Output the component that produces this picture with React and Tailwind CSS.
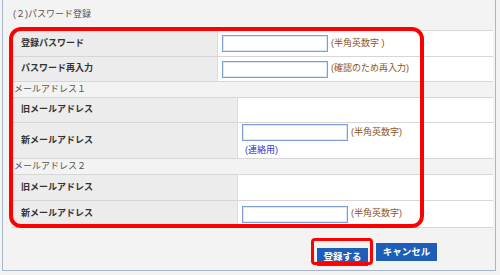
const font = "font-['Liberation_Sans','Noto_Sans_CJK_JP',sans-serif]";

function Label({ children, width }) {
  return (
    <div className={`${width} shrink-0 bg-[#ececec] border-r border-[#dcdcdc] pl-[9px] flex items-center text-[9px] font-bold text-[#333]`}>
      {children}
    </div>
  );
}

function Field({ hint, sub }) {
  return (
    <div className="flex flex-col">
      <div className="flex items-center">
        <div className="w-[106px] h-[17px] bg-white border border-[#7f9fd4] shadow-[inset_0_0_0_1px_#dbe6f7]" />
        <span className="ml-[3px] text-[9px] text-[#8a5426]">{hint}</span>
      </div>
      {sub && <span className="ml-[3px] mt-[3px] text-[9px] text-[#3232d0]">{sub}</span>}
    </div>
  );
}

function Row({ label, width, height, children }) {
  return (
    <div className={`flex ${height} border-b border-[#d6d6d6]`}>
      <Label width={width}>{label}</Label>
      <div className="flex-1 bg-white flex items-center pl-[4px]">{children}</div>
    </div>
  );
}

function Section({ children }) {
  return <div className="h-[15px] flex items-center pl-[2px] text-[9px] text-[#555]">{children}</div>;
}

export default function App() {
  return (
    <div className={`w-[500px] h-[275px] bg-[#f3f3f4] ${font}`}>
      <div className="ml-[2px] w-[494px] h-[271px] border-x border-b border-[#a8b6cc] pl-[9px]">
        {/* title */}
        <div className="h-[30px] flex items-center pl-[1px] text-[9px] text-[#555]">(２)パスワード登録</div>

        {/* form tables, red highlight drawn over them */}
        <div className="relative w-[481px]">
          <div className="border-t border-[#d6d6d6]">
            <Row label="登録パスワード" width="w-[206px]" height="h-[26px]">
              <Field hint="(半角英数字 )" />
            </Row>
            <Row label="パスワード再入力" width="w-[206px]" height="h-[25px]">
              <Field hint="(確認のため再入力)" />
            </Row>
          </div>

          <Section>メールアドレス１</Section>
          <div className="border-t border-[#d6d6d6]">
            <Row label="旧メールアドレス" width="w-[226px]" height="h-[25px]" />
            <Row label="新メールアドレス" width="w-[226px]" height="h-[36px]">
              <Field hint="(半角英数字)" sub="(連絡用)" />
            </Row>
          </div>

          <Section>メールアドレス２</Section>
          <div className="border-t border-[#d6d6d6]">
            <Row label="旧メールアドレス" width="w-[226px]" height="h-[26px]" />
            <Row label="新メールアドレス" width="w-[226px]" height="h-[27px]">
              <Field hint="(半角英数字)" />
            </Row>
          </div>

          <div className="absolute left-[-3px] top-[-3px] w-[415px] h-[201px] border-[4px] border-[#ff0000] rounded-[12px] pointer-events-none" />
        </div>

        {/* buttons */}
        <div className="flex gap-[8px] pl-[305px] mt-[15px]">
          <div className="relative">
            <button className="w-[51px] h-[18px] bg-[#1d5fb8] text-white text-[9.5px] font-bold">登録する</button>
            <div className="absolute left-[-6px] top-[-5px] w-[62px] h-[27px] border-[3px] border-[#ff0000] rounded-[4px] pointer-events-none" />
          </div>
          <button className="w-[61px] h-[18px] bg-[#1d5fb8] text-white text-[9.5px] font-bold">キャンセル</button>
        </div>
      </div>
    </div>
  );
}
